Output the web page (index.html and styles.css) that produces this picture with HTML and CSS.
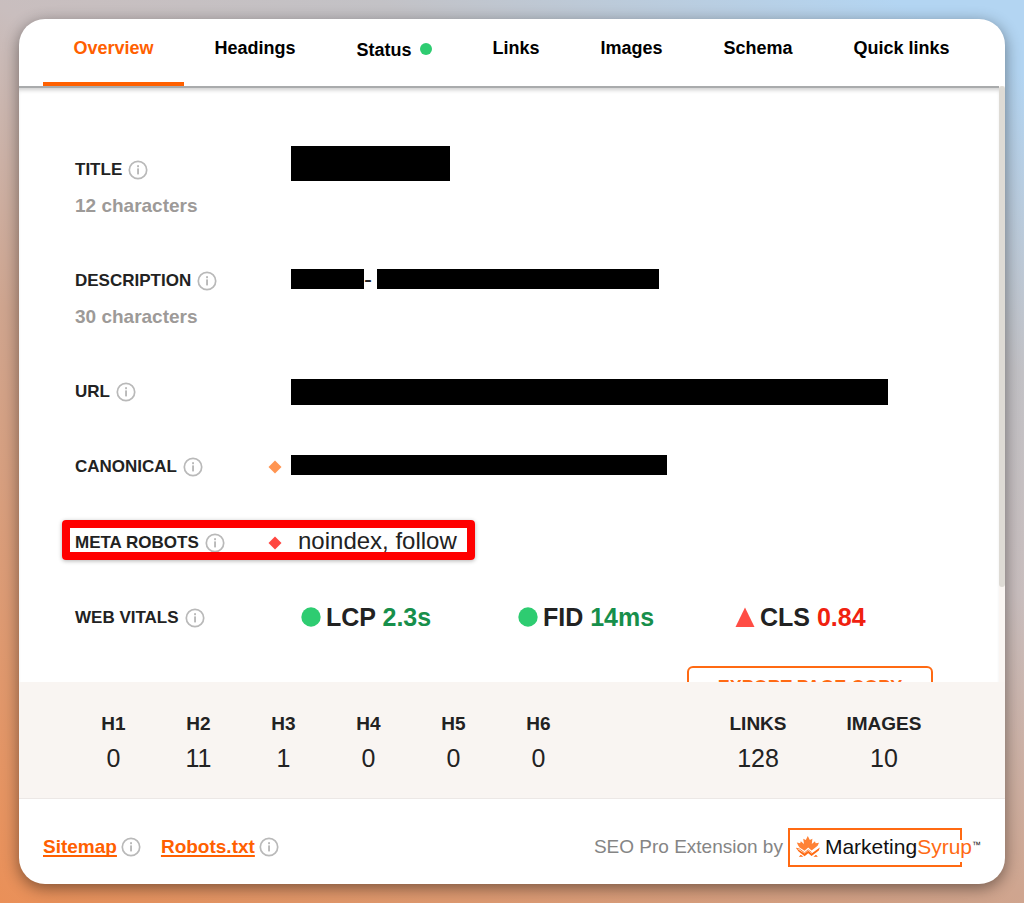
FILE: index.html
```html
<!DOCTYPE html>
<html lang="en">
<head>
  <meta charset="UTF-8">
  <meta name="viewport" content="width=device-width, initial-scale=1.0">
  <title>SEO Pro Extension</title>
  <link rel="stylesheet" href="styles.css">
</head>
<body>

  <!-- shared icons -->
  <svg class="sprite" aria-hidden="true">
    <symbol id="info" viewBox="0 0 20 20">
      <circle cx="10" cy="10" r="8.7" fill="none" stroke="#b9b9b9" stroke-width="1.7"/>
      <rect x="9.1" y="8.4" width="1.9" height="6" fill="#b9b9b9"/>
      <rect x="9.1" y="5.2" width="1.9" height="2" fill="#b9b9b9"/>
    </symbol>
    <symbol id="diamond" viewBox="0 0 14 14">
      <path d="M7 .5 13.5 7 7 13.5.5 7z" fill="currentColor"/>
    </symbol>
  </svg>

  <div class="popup">
    <nav class="tabs">
      <a href="#overview" class="tab active">Overview</a>
      <a href="#headings" class="tab">Headings</a>
      <a href="#status" class="tab tab-status">Status <span class="status-dot"></span></a>
      <a href="#links" class="tab">Links</a>
      <a href="#images" class="tab">Images</a>
      <a href="#schema" class="tab">Schema</a>
      <a href="#quick-links" class="tab">Quick links</a>
    </nav>

    <div class="main">
      <div class="content" id="overview">
        <div class="row">
          <div class="label">TITLE <svg class="info"><use href="#info"/></svg></div>
          <div class="value"><span class="redacted redacted-title"></span></div>
          <div class="note">12 characters</div>
        </div>

        <div class="row">
          <div class="label">DESCRIPTION <svg class="info"><use href="#info"/></svg></div>
          <div class="value"><span class="redacted redacted-name"></span><span class="dash">-</span><span class="redacted redacted-description"></span></div>
          <div class="note">30 characters</div>
        </div>

        <div class="row">
          <div class="label">URL <svg class="info"><use href="#info"/></svg></div>
          <div class="value"><span class="redacted redacted-url"></span></div>
        </div>

        <div class="row">
          <div class="label">CANONICAL <svg class="info"><use href="#info"/></svg></div>
          <svg class="marker warning"><use href="#diamond"/></svg>
          <div class="value"><span class="redacted redacted-canonical"></span></div>
        </div>

        <div class="row highlighted">
          <div class="label">META ROBOTS <svg class="info"><use href="#info"/></svg></div>
          <svg class="marker error"><use href="#diamond"/></svg>
          <div class="value robots">noindex, follow</div>
        </div>

        <div class="row">
          <div class="label">WEB VITALS <svg class="info"><use href="#info"/></svg></div>
          <div class="value vitals">
            <div class="vital">
              <svg class="vital-icon" viewBox="0 0 20 20"><circle cx="10" cy="10" r="9.7" fill="#2ecc71"/></svg>
              <span>LCP <b class="good">2.3s</b></span>
            </div>
            <div class="vital">
              <svg class="vital-icon" viewBox="0 0 20 20"><circle cx="10" cy="10" r="9.7" fill="#2ecc71"/></svg>
              <span>FID <b class="good">14ms</b></span>
            </div>
            <div class="vital">
              <svg class="vital-icon" viewBox="0 0 20 20"><path d="M10 .6 19.5 20H.5z" fill="#ff4d45"/></svg>
              <span>CLS <b class="bad">0.84</b></span>
            </div>
          </div>
        </div>

        <button type="button" class="export">EXPORT PAGE COPY</button>
      </div>
      <div class="scrollbar"><div class="thumb"></div></div>
    </div>

    <div class="stats">
      <table>
        <colgroup>
          <col span="6" class="col-heading">
          <col>
          <col span="2" class="col-total">
        </colgroup>
        <thead>
          <tr>
            <th>H1</th><th>H2</th><th>H3</th><th>H4</th><th>H5</th><th>H6</th>
            <td></td>
            <th>LINKS</th><th>IMAGES</th>
          </tr>
        </thead>
        <tbody>
          <tr>
            <td>0</td><td>11</td><td>1</td><td>0</td><td>0</td><td>0</td>
            <td></td>
            <td>128</td><td>10</td>
          </tr>
        </tbody>
      </table>
    </div>

    <footer class="footer">
      <div class="files">
        <a href="#sitemap">Sitemap</a> <svg class="info"><use href="#info"/></svg>
        <a href="#robots" class="robots-link">Robots.txt</a> <svg class="info"><use href="#info"/></svg>
      </div>
      <div class="credit">
        <span>SEO Pro Extension by</span>
        <a href="#marketingsyrup" class="logo">
          <svg class="logo-frame" viewBox="0 0 174 39"><path d="M173 12V1H1v37h172v-4" fill="none" stroke="#ff6a13" stroke-width="2"/></svg>
          <svg class="leaf" viewBox="0 0 24 22">
            <path d="M11.8 0 13.8 4 16.4 2.8 15.8 8 19 5.2 19.6 7.2 23 6.8 21.6 9.8 15.6 14.4 12.2 11.6 8.6 14.8 3.6 11.4 2.2 9.6.8 6.6 4.2 7.2 4.8 5.2 8 8 7.2 2.8 9.8 4z" fill="#ff8236"/>
            <path d="M.2 12.2 3.4 13 8.6 16.8 12.2 13.8 15.6 16.6" fill="none" stroke="#ff8236" stroke-width="1"/>
            <path d="M12.2 14.8 15.6 17.6 23.8 11.4 22.8 14.6 15.6 20 12.2 17.2 8.6 20.2 2.6 15.4.2 12.2 8.6 17.6z" fill="#ff6a13"/>
            <path d="M2.8 20.8 4.8 18.8 7.4 20.8zM17.4 20.8 20 18.8 21.8 20.8z" fill="#ff6a13"/>
          </svg>
          <span class="logo-text">Marketing<span class="syrup">Syrup</span></span><span class="tm">™</span>
        </a>
      </div>
    </footer>
  </div>

</body>
</html>
```

FILE: styles.css
```css
*, *::after {
  box-sizing: border-box;
}
body {
  margin: 0;
  padding: 19px;
  height: 100vh;
  font-family: "Liberation Sans", Arial, sans-serif;
  font-size: 18px;
  color: #222;
  background: linear-gradient(30deg, #ea9058 0%, #cfa58f 40%, #c9bebe 60%, #c3c2c6 75%, #b3d5f2 95%);
}
.sprite {
  display: none;
}
.popup {
  display: flex;
  flex-direction: column;
  height: 100%;
  background: #fff;
  border-radius: 26px;
  overflow: hidden;
  box-shadow: 0 4px 16px rgba(0, 0, 0, 0.45);
}

/* tabs */
.tabs {
  display: flex;
  padding: 0 25px 0 24px;
}
.tab {
  flex: 1 1 auto;
  height: 67px;
  padding-top: 17px;
  line-height: 24px;
  text-align: center;
  white-space: nowrap;
  font-weight: bold;
  color: #000;
  text-decoration: none;
  border-bottom: 4px solid transparent;
}
.tab.active {
  color: #ff6000;
  border-bottom-color: #ff6000;
}
.tab-status {
  padding-top: 19px;
}
.status-dot {
  display: inline-block;
  width: 12px;
  height: 12px;
  margin-left: 3px;
  vertical-align: 1px;
  border-radius: 50%;
  background: #2ecc71;
}

/* overview */
.main {
  display: flex;
  flex: 1;
  min-height: 0;
}
.content {
  flex: 1;
  overflow: hidden;
  padding: 64px 66px 0 56px;
  border-top: 2px solid #a9abac;
  box-shadow: inset 0 4px 4px -2px rgba(0, 0, 0, 0.2);
}
.scrollbar {
  width: 6px;
  background: #faf6f3;
}
.thumb {
  height: 84%;
  border-radius: 4px;
  background: #dedbd5;
}
.row {
  display: grid;
  grid-template-columns: 193px 23px 1fr;
  grid-auto-rows: 36px;
  align-items: center;
  margin-bottom: 39px;
  position: relative;
}
.label {
  display: flex;
  align-items: center;
  gap: 6px;
  font-size: 17px;
  font-weight: bold;
}
.note {
  grid-column: 1;
  font-size: 19px;
  font-weight: bold;
  color: #9d9a98;
}
.info {
  width: 20px;
  height: 20px;
}
.marker {
  width: 14px;
  height: 14px;
}
.warning {
  color: #ff9552;
}
.error {
  color: #ff4640;
}
.value {
  grid-column: 3;
  display: flex;
  align-items: center;
  font-size: 24px;
}
.robots {
  padding-left: 7px;
  padding-bottom: 4px;
}
.redacted {
  height: 20px;
  margin-bottom: 4px;
  background: #000;
}
.redacted-title {
  width: 159px;
  height: 35px;
  margin-bottom: 14px;
}
.redacted-name {
  width: 73px;
}
.dash {
  width: 13px;
  line-height: 24px;
  margin-bottom: 4px;
}
.redacted-description {
  width: 282px;
}
.redacted-url {
  width: 597px;
  height: 26px;
  margin-bottom: 0;
}
.redacted-canonical {
  width: 376px;
}
.highlighted {
  margin-top: 40px;
}
.highlighted::after {
  content: "";
  position: absolute;
  left: -13px;
  top: -5px;
  width: 413px;
  height: 40px;
  border: 8px solid #f00;
  border-radius: 4px;
  box-shadow: 0 1px 4px rgba(0, 0, 0, 0.3);
}
.vitals {
  font-size: 25px;
  font-weight: bold;
  padding-left: 10px;
  padding-bottom: 2px;
}
.vital {
  display: flex;
  align-items: center;
  gap: 5px;
  width: 217px;
  white-space: nowrap;
}
.vital:last-child {
  width: auto;
}
.vital-icon {
  width: 20px;
  height: 20px;
}
.good {
  color: #178f4b;
}
.bad {
  color: #f0210f;
}
.export {
  display: block;
  width: 246px;
  height: 42px;
  margin: -9px 0 0 auto;
  padding: 0;
  border: 2px solid #ff6a13;
  border-radius: 6px;
  background: #fff;
  color: #ff6a13;
  font-family: inherit;
  font-size: 18px;
  font-weight: bold;
}

/* heading counts */
.stats {
  padding: 24px 58px 22px 52px;
  background: #f9f5f2;
  border-bottom: 1px solid #ece8e6;
}
.stats table {
  width: 100%;
  table-layout: fixed;
  border-collapse: collapse;
}
.col-heading {
  width: 85px;
}
.col-total {
  width: 126px;
}
.stats th,
.stats td {
  padding: 0;
  line-height: 35px;
  text-align: center;
}
.stats th {
  font-size: 19px;
}
.stats td {
  font-size: 25px;
}

/* footer */
.footer {
  display: flex;
  justify-content: space-between;
  align-items: center;
  height: 85px;
  padding: 11px 24px 0;
}
.files {
  display: flex;
  align-items: center;
  gap: 4px;
  font-size: 19px;
  font-weight: bold;
}
.files a {
  color: #ff6000;
  text-decoration-thickness: 2px;
  text-underline-offset: 2px;
  text-decoration-skip-ink: none;
}
.robots-link {
  margin-left: 16px;
}
.credit {
  display: flex;
  align-items: center;
  gap: 5px;
  font-size: 19px;
  color: #858585;
}
.logo {
  position: relative;
  display: flex;
  align-items: center;
  height: 39px;
  padding-left: 8px;
  font-size: 21px;
  color: #111;
  text-decoration: none;
}
.logo-frame {
  position: absolute;
  left: 0;
  top: 0;
  width: 174px;
  height: 39px;
}
.leaf {
  width: 24px;
  height: 22px;
  margin-right: 5px;
}
.syrup {
  color: #ff6a13;
}
.tm {
  align-self: flex-start;
  margin-top: 12px;
  font-size: 9px;
  line-height: 10px;
}
```
